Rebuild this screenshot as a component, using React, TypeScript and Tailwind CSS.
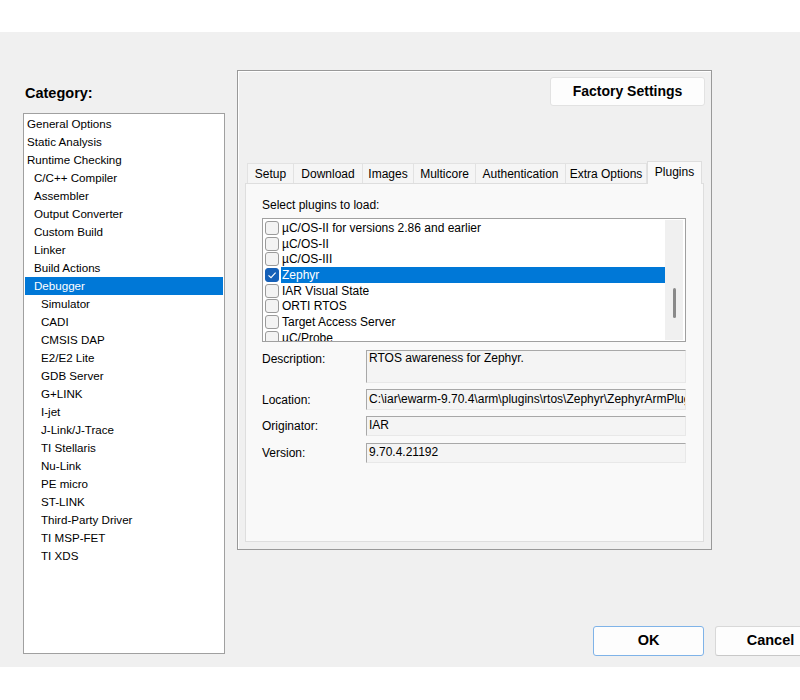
import React from "react";

const categories: { label: string; level: 0 | 1 | 2; selected?: boolean }[] = [
  { label: "General Options", level: 0 },
  { label: "Static Analysis", level: 0 },
  { label: "Runtime Checking", level: 0 },
  { label: "C/C++ Compiler", level: 1 },
  { label: "Assembler", level: 1 },
  { label: "Output Converter", level: 1 },
  { label: "Custom Build", level: 1 },
  { label: "Linker", level: 1 },
  { label: "Build Actions", level: 1 },
  { label: "Debugger", level: 1, selected: true },
  { label: "Simulator", level: 2 },
  { label: "CADI", level: 2 },
  { label: "CMSIS DAP", level: 2 },
  { label: "E2/E2 Lite", level: 2 },
  { label: "GDB Server", level: 2 },
  { label: "G+LINK", level: 2 },
  { label: "I-jet", level: 2 },
  { label: "J-Link/J-Trace", level: 2 },
  { label: "TI Stellaris", level: 2 },
  { label: "Nu-Link", level: 2 },
  { label: "PE micro", level: 2 },
  { label: "ST-LINK", level: 2 },
  { label: "Third-Party Driver", level: 2 },
  { label: "TI MSP-FET", level: 2 },
  { label: "TI XDS", level: 2 },
];

const levelPad = ["pl-[2px]", "pl-[9px]", "pl-[16px]"];

const tabs: { label: string; w: string }[] = [
  { label: "Setup", w: "w-[46px]" },
  { label: "Download", w: "w-[69px]" },
  { label: "Images", w: "w-[51px]" },
  { label: "Multicore", w: "w-[62px]" },
  { label: "Authentication", w: "w-[90px]" },
  { label: "Extra Options", w: "w-[82px]" },
];

const plugins: { label: string; checked?: boolean }[] = [
  { label: "µC/OS-II for versions 2.86 and earlier" },
  { label: "µC/OS-II" },
  { label: "µC/OS-III" },
  { label: "Zephyr", checked: true },
  { label: "IAR Visual State" },
  { label: "ORTI RTOS" },
  { label: "Target Access Server" },
  { label: "µC/Probe" },
];

function Checkbox({ checked }: { checked?: boolean }) {
  if (checked) {
    return (
      <div className="w-[14px] h-[14px] shrink-0 rounded-[3px] bg-[#1560b8] border border-[#1560b8] flex items-center justify-center">
        <svg width="12" height="12" viewBox="0 0 12 12">
          <path d="M2.5 6.3 L5 8.7 L9.6 3.6" fill="none" stroke="#ffffff" strokeWidth="1.1" />
        </svg>
      </div>
    );
  }
  return <div className="w-[14px] h-[14px] shrink-0 rounded-[3px] bg-[#f3f3f3] border border-[#9a9a9a]" />;
}

function Field({ children, h }: { children?: React.ReactNode; h: string }) {
  return (
    <div
      className={`w-[320px] ${h} bg-[#f4f4f4] border-t border-l border-[#a8a8a8] border-r border-b border-r-[#e8e8e8] border-b-[#e8e8e8] pl-[2px] text-[12px] whitespace-nowrap overflow-hidden`}
    >
      {children}
    </div>
  );
}

export default function App() {
  return (
    <div className="w-[800px] h-[700px] bg-white overflow-hidden font-['Liberation_Sans',Arial,sans-serif] text-black">
      <div className="mt-[32px] h-[635px] bg-[#f0f0f0] flex overflow-hidden">
        {/* Left column */}
        <div className="w-[225px] shrink-0 pl-[23px] pt-[52px] flex flex-col">
          <div className="h-[18px] leading-[18px] text-[14.5px] font-bold pl-[2px] mb-[11px]">Category:</div>
          <div className="w-[202px] h-[541px] bg-white border border-[#a0a0a0] pt-[1px] text-[11.6px]">
            {categories.map((c) => (
              <div
                key={c.label}
                className={`mx-[1px] h-[18px] leading-[18px] whitespace-nowrap ${levelPad[c.level]} ${
                  c.selected ? "bg-[#0078d7] text-white" : ""
                }`}
              >
                {c.label}
              </div>
            ))}
          </div>
        </div>

        {/* Right column */}
        <div className="shrink-0 ml-[12px] pt-[38px] flex flex-col">
          <div className="w-[475px] h-[480px] border border-[#999999] shadow-[inset_1px_1px_0_#ffffff] flex flex-col px-[7px] pt-[6px]">
            <div className="flex justify-end -mr-[1px]">
              <div className="w-[155px] h-[29px] bg-[#fdfdfd] border border-[#e2e2e2] rounded-[3px] flex items-center justify-center text-[14px] font-bold">
                Factory Settings
              </div>
            </div>

            {/* Tabs */}
            <div className="mt-[55px] h-[22px] flex items-end pl-[2px] text-[12px]">
              {tabs.map((t, i) => (
                <div
                  key={t.label}
                  className={`${t.w} h-[20px] leading-[20px] text-center bg-[#f5f5f5] border-t border-l border-[#e2e2e2] ${
                    i === tabs.length - 1 ? "border-r" : ""
                  }`}
                >
                  {t.label}
                </div>
              ))}
              <div className="w-[55px] h-[23px] -mb-[1px] relative z-10 leading-[20px] text-center bg-[#f9f9f9] border border-b-0 border-[#dedede]">
                Plugins
              </div>
            </div>

            {/* Tab content */}
            <div className="h-[359px] bg-[#f9f9f9] border border-[#dedede] pl-[16px] pt-[13px] flex flex-col text-[12px]">
              <div className="h-[16px] leading-[16px]">Select plugins to load:</div>
              <div className="mt-[5px] w-[424px] h-[124px] bg-white border border-[#a0a0a0] flex overflow-hidden">
                <div className="flex-1 pt-[1px] pl-[2px] overflow-hidden">
                  {plugins.map((p) => (
                    <div key={p.label} className="h-[15.7px] flex items-center">
                      <Checkbox checked={p.checked} />
                      <div
                        className={`ml-[2px] flex-1 h-[16px] leading-[16px] pl-[1px] whitespace-nowrap ${
                          p.checked ? "bg-[#0078d7] text-white" : ""
                        }`}
                      >
                        {p.label}
                      </div>
                    </div>
                  ))}
                </div>
                <div className="w-[18px] my-[1px] mr-[2px] bg-[#f0f0f0] flex flex-col items-center pt-[68px]">
                  <div className="w-[3px] h-[30px] rounded-full bg-[#8a8a8a]" />
                </div>
              </div>

              {/* Fields */}
              <div className="mt-[8px] flex flex-col">
                <div className="flex items-start">
                  <div className="w-[104px] leading-[16px] pt-[1px]">Description:</div>
                  <Field h="h-[33px]">
                    <div className="leading-[14px]">RTOS awareness for Zephyr.</div>
                  </Field>
                </div>
                <div className="flex items-center mt-[6px]">
                  <div className="w-[104px] leading-[16px]">Location:</div>
                  <Field h="h-[21px] leading-[19px]">
                    C:\iar\ewarm-9.70.4\arm\plugins\rtos\Zephyr\ZephyrArmPlugin.dll
                  </Field>
                </div>
                <div className="flex items-center mt-[6px]">
                  <div className="w-[104px] leading-[16px]">Originator:</div>
                  <Field h="h-[20px] leading-[17px]">IAR</Field>
                </div>
                <div className="flex items-center mt-[7px]">
                  <div className="w-[104px] leading-[16px]">Version:</div>
                  <Field h="h-[20px] leading-[17px]">9.70.4.21192</Field>
                </div>
              </div>
            </div>
          </div>

          {/* Buttons */}
          <div className="mt-[76px] flex gap-[11px] pl-[356px]">
            <div className="w-[111px] h-[30px] shrink-0 bg-[#fdfdfd] border border-[#7fb3e8] rounded-[3px] flex items-center justify-center text-[14.5px] font-bold">
              OK
            </div>
            <div className="w-[111px] h-[30px] shrink-0 bg-[#fdfdfd] border border-[#d8d8d8] border-b-[#c8c8c8] rounded-[3px] flex items-center justify-center text-[14.5px] font-bold">
              Cancel
            </div>
          </div>
        </div>
      </div>
    </div>
  );
}
